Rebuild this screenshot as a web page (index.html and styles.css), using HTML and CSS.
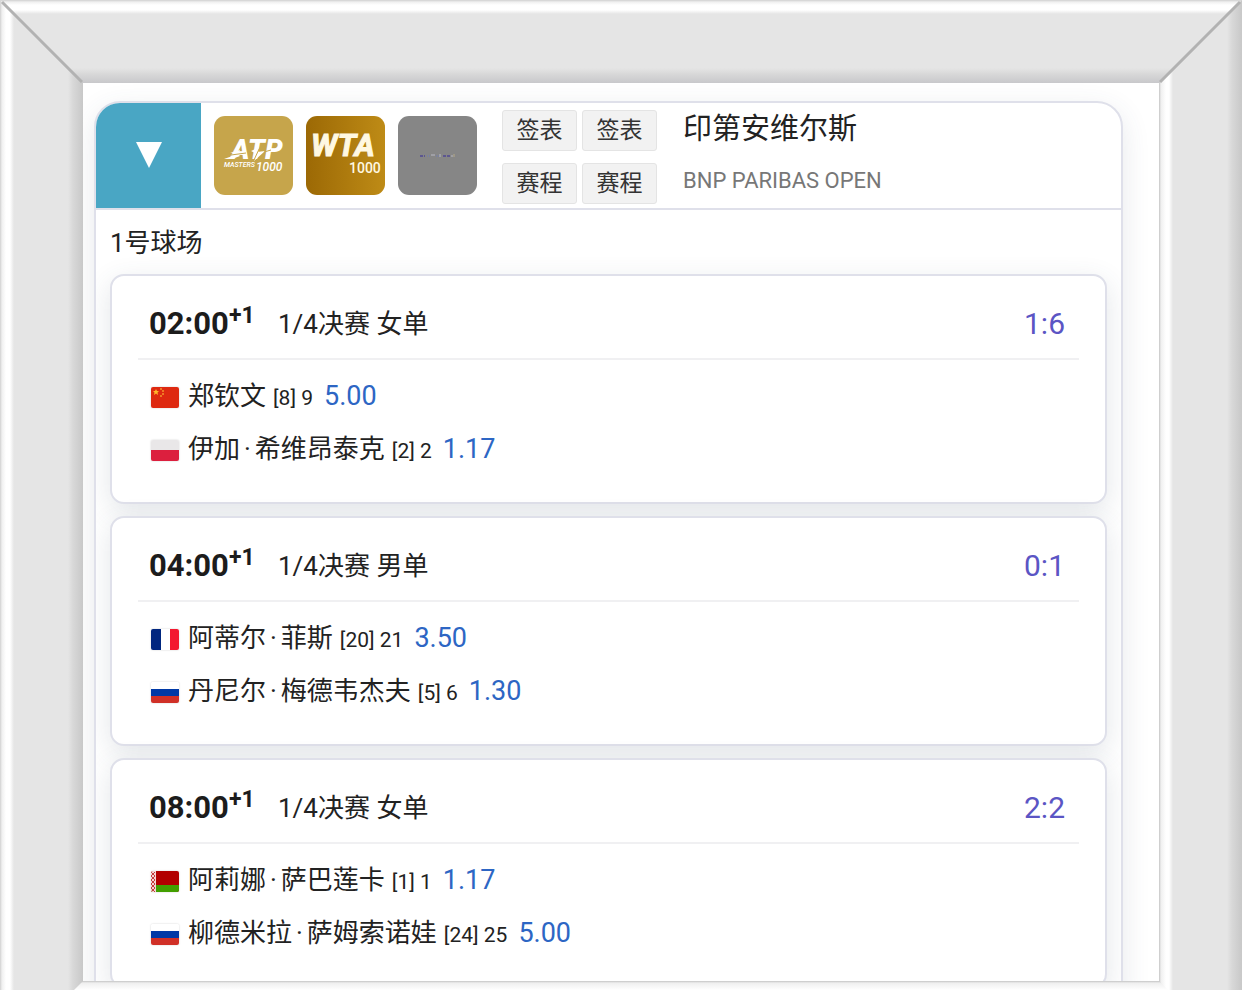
FILE: index.html
```
<!DOCTYPE html>
<html lang="zh-CN">
<head>
<meta charset="UTF-8">
<meta name="viewport" content="width=device-width, initial-scale=1.0">
<title>印第安维尔斯</title>
<link rel="stylesheet" href="styles.css">
</head>
<body>
    <div class="frame">
        <div class="bar left"></div>
        <div class="bar right"></div>
        <div class="bar top"></div>
        <div class="bar bottom"></div>
        <svg class="mitre mitre-left" viewBox="0 0 83 83"><path d="M2 2L82 82" stroke="#b2b2b2" stroke-width="3"/></svg>
        <svg class="mitre mitre-right" viewBox="0 0 83 83"><path d="M81 2L1 82" stroke="#b2b2b2" stroke-width="3"/></svg>

        <main class="screen">
            <section class="tour">
                <header class="tour-head">
                    <button class="toggle" type="button" aria-label="收起">
                        <svg width="26" height="26" viewBox="0 0 26 26"><path d="M0 0H26L13 26Z" fill="#fff"/></svg>
                    </button>
                    <div class="logos">
                        <svg class="logo" viewBox="0 0 79 79">
                            <rect width="79" height="79" rx="11" fill="#c6a54b"/>
                            <g fill="#fff" font-family="Roboto, sans-serif" font-style="italic">
                                <text x="17" y="43" font-size="28" font-weight="900">ATP</text>
                                <text x="10" y="51" font-size="7" font-weight="500">MASTERS</text>
                                <text x="42" y="55" font-size="12" font-weight="500">1000</text>
                            </g>
                            <path d="M10 43L24 38L26 40L18 43ZM16 37L26 34L25 37ZM37 35L46 31L43 36L51 35L40 45L43 38Z" fill="#fff"/>
                            <path d="M17 39L32 37M46 31L40 44M50 36L57 34" fill="none" stroke="#c6a54b" stroke-width="1"/>
                        </svg>
                        <svg class="logo" viewBox="0 0 79 79">
                            <defs>
                                <linearGradient id="gold" x1="0" y1="0" x2="1" y2="0">
                                    <stop offset="0" stop-color="#9c6905"/>
                                    <stop offset="1" stop-color="#be8b16"/>
                                </linearGradient>
                            </defs>
                            <rect width="79" height="79" rx="11" fill="url(#gold)"/>
                            <g fill="#fff8e2" font-family="Roboto, sans-serif">
                                <text x="5" y="40" font-size="31" font-weight="700" font-style="italic" stroke="#fff8e2" stroke-width="1">WTA</text>
                                <text x="43" y="57" font-size="14" font-weight="500">1000</text>
                            </g>
                        </svg>
                        <svg class="logo" viewBox="0 0 79 79">
                            <rect width="79" height="79" rx="11" fill="#868686"/>
                            <path d="M22 40H27M45 40H52" stroke="#5d5790" stroke-width="2" stroke-dasharray="3 1"/>
                            <path d="M29 40H32M38 40H41" stroke="#7980a0" stroke-width="2" stroke-dasharray="1 1"/>
                            <path d="M33 39H37M42 38V41M53 40H55" stroke="#b9b9c4" stroke-width="1"/>
                            <path d="M56 38V41" stroke="#b5a988" stroke-width="1"/>
                        </svg>
                    </div>
                    <div class="links">
                        <button type="button">签表</button>
                        <button type="button">签表</button>
                        <button type="button">赛程</button>
                        <button type="button">赛程</button>
                    </div>
                    <div class="name">
                        <h1>印第安维尔斯</h1>
                        <p>BNP PARIBAS OPEN</p>
                    </div>
                </header>

                <div class="court">
                    <h2>1号球场</h2>

                    <article class="match">
                        <div class="match-head">
                            <span class="time">02:00<sup>+1</sup></span>
                            <span class="round">1/4决赛 女单</span>
                            <span class="score">1:6</span>
                        </div>
                        <div class="player">
                            <svg class="flag" viewBox="0 0 28 21">
                                <rect width="28" height="21" fill="#de2910"/>
                                <path d="M5 2L6 4H8L6.500 5.500L7 8L5 6.500L3 8L3.500 5.500L2 4H4Z" fill="#ffb52b"/>
                                <circle cx="10" cy="2" r="1" fill="#f5952b"/>
                                <circle cx="12" cy="4" r="1" fill="#f5952b"/>
                                <circle cx="12" cy="7" r="1" fill="#f5952b"/>
                                <circle cx="10" cy="9" r="1" fill="#f5952b"/>
                            </svg>
                            <span>郑钦文</span>
                            <span class="rank">[8] 9</span>
                            <span class="odds">5.00</span>
                        </div>
                        <div class="player">
                            <svg class="flag" viewBox="0 0 28 21">
                                <rect width="28" height="21" fill="#e9e7e8"/>
                                <rect y="10" width="28" height="11" fill="#dc1f3e"/>
                            </svg>
                            <span>伊加<span class="dot">·</span>希维昂泰克</span>
                            <span class="rank">[2] 2</span>
                            <span class="odds">1.17</span>
                        </div>
                    </article>

                    <article class="match">
                        <div class="match-head">
                            <span class="time">04:00<sup>+1</sup></span>
                            <span class="round">1/4决赛 男单</span>
                            <span class="score">0:1</span>
                        </div>
                        <div class="player">
                            <svg class="flag" viewBox="0 0 28 21">
                                <rect width="28" height="21" fill="#fff"/>
                                <rect width="10" height="21" fill="#00267f"/>
                                <rect x="19" width="9" height="21" fill="#f31830"/>
                            </svg>
                            <span>阿蒂尔<span class="dot">·</span>菲斯</span>
                            <span class="rank">[20] 21</span>
                            <span class="odds">3.50</span>
                        </div>
                        <div class="player">
                            <svg class="flag" viewBox="0 0 28 21">
                                <rect width="28" height="21" fill="#fff"/>
                                <rect y="7" width="28" height="7" fill="#0039a6"/>
                                <rect y="14" width="28" height="7" fill="#d03027"/>
                            </svg>
                            <span>丹尼尔<span class="dot">·</span>梅德韦杰夫</span>
                            <span class="rank">[5] 6</span>
                            <span class="odds">1.30</span>
                        </div>
                    </article>

                    <article class="match">
                        <div class="match-head">
                            <span class="time">08:00<sup>+1</sup></span>
                            <span class="round">1/4决赛 女单</span>
                            <span class="score">2:2</span>
                        </div>
                        <div class="player">
                            <svg class="flag" viewBox="0 0 28 21">
                                <rect width="28" height="21" fill="#b20000"/>
                                <rect y="14" width="28" height="7" fill="#429f00"/>
                                <rect width="5" height="21" fill="#f2d5d5"/>
                                <path d="M0 1L4 5L0 9L4 13L0 17L4 21M4 1L0 5L4 9L0 13L4 17L0 21" fill="none" stroke="#c43c3c"/>
                            </svg>
                            <span>阿莉娜<span class="dot">·</span>萨巴莲卡</span>
                            <span class="rank">[1] 1</span>
                            <span class="odds">1.17</span>
                        </div>
                        <div class="player">
                            <svg class="flag" viewBox="0 0 28 21">
                                <rect width="28" height="21" fill="#fff"/>
                                <rect y="7" width="28" height="7" fill="#0039a6"/>
                                <rect y="14" width="28" height="7" fill="#d03027"/>
                            </svg>
                            <span>柳德米拉<span class="dot">·</span>萨姆索诺娃</span>
                            <span class="rank">[24] 25</span>
                            <span class="odds">5.00</span>
                        </div>
                    </article>
                </div>
            </section>
        </main>
    </div>
</body>
</html>
```
FILE: styles.css
```
* {
    box-sizing: border-box;
}
body {
    margin: 0;
    color: #222;
    font-family: Roboto, "Noto Sans CJK SC", sans-serif;
    font-size: 26px;
}
h1, h2, p {
    margin: 0;
    font-weight: 400;
}
button {
    border: 0;
    padding: 0;
    color: inherit;
    font: inherit;
    cursor: pointer;
}

/* frame */
.frame {
    display: grid;
    grid-template-columns: 83px minmax(0, 1fr) 83px;
    grid-template-rows: 83px minmax(0, 1fr) 9px;
    height: 100vh;
    overflow: hidden;
}
.left {
    grid-area: 1 / 1 / 4 / 2;
    background: linear-gradient(90deg, #d0d0d0 0, #f0f0f0 2px, #fff 6px, #fff 10px, #e5e5e5 14px, #e5e5e5 68px, #d8d8d8 73px, #c8c8c8 83px);
}
.right {
    grid-area: 1 / 3 / 4 / 4;
    background: linear-gradient(90deg, #c4c4c4 0, #f0f0f0 2px, #fff 7px, #fff 10px, #e5e5e5 14px, #e5e5e5 68px, #d8d8d8 73px, #c8c8c8 83px);
}
.top {
    grid-area: 1 / 1 / 2 / 4;
    background: linear-gradient(#d0d0d0 0, #f0f0f0 2px, #fff 5px, #fff 10px, #e5e5e5 14px, #e5e5e5 68px, #d8d8d8 74px, #c8c8cb 83px);
    clip-path: polygon(0 0, 100% 0, calc(100% - 83px) 100%, 83px 100%);
}
.bottom {
    grid-area: 3 / 1 / 4 / 4;
    background: linear-gradient(#c4c4c4 0, #efefef 2px, #fff 9px);
    clip-path: polygon(83px 0, calc(100% - 83px) 0, calc(100% - 74px) 100%, 74px 100%);
}
.mitre {
    z-index: 1;
    width: 83px;
    height: 83px;
}
.mitre-left {
    grid-area: 1 / 1;
}
.mitre-right {
    grid-area: 1 / 3;
}
.screen {
    grid-area: 2 / 2;
    padding: 18px 36px 0 11px;
    overflow: hidden;
    background: #fff;
}

/* tournament */
.tour {
    border: 2px solid #dfe0ea;
    border-radius: 26px;
    overflow: hidden;
    background: #fff;
    box-shadow: 0 8px 28px rgba(60, 70, 100, 0.12);
}
.tour-head {
    display: flex;
    height: 107px;
    border-bottom: 2px solid #dfe0ea;
}
.toggle {
    display: flex;
    align-items: center;
    justify-content: center;
    width: 105px;
    padding-bottom: 2px;
    background: #49a6c4;
}
.logos {
    display: flex;
    gap: 13px;
    padding: 13px 25px 0 13px;
}
.logo {
    width: 79px;
    height: 79px;
}
.links {
    display: grid;
    grid-template-columns: 75px 75px;
    grid-auto-rows: 41px;
    gap: 12px 5px;
    padding-top: 7px;
}
.links button {
    border: 1px solid #e4e4e4;
    border-radius: 3px;
    background: #f2f2f2;
    color: #333;
    font-size: 23px;
    line-height: 39px;
}
.name {
    padding: 5px 0 0 26px;
}
.name h1 {
    font-size: 29px;
    line-height: 42px;
}
.name p {
    margin-top: 15px;
    color: #777;
    font-size: 22px;
    line-height: 32px;
}

/* matches */
.court {
    padding: 0 14px 12px;
}
.court h2 {
    padding: 13px 0 11px;
    font-size: 26px;
    line-height: 40px;
}
.match {
    height: 230px;
    margin-bottom: 12px;
    padding: 0 26px;
    border: 2px solid #dfe0ea;
    border-radius: 14px;
    background: #fff;
    box-shadow: 0 8px 28px rgba(60, 80, 100, 0.14);
}
.match-head {
    display: flex;
    align-items: center;
    height: 84px;
    margin-bottom: 10px;
    padding: 14px 14px 0 11px;
    border-bottom: 2px solid #f0f0f2;
    line-height: 40px;
}
.time {
    width: 129px;
    color: #1c1c1c;
    font-size: 31px;
    font-weight: 700;
}
.time sup {
    font-size: 23px;
    line-height: 0;
}
.score {
    margin-left: auto;
    color: #5b55c4;
    font-size: 30px;
}
.player {
    display: flex;
    align-items: baseline;
    height: 53px;
    padding-left: 13px;
    line-height: 53px;
}
.flag {
    align-self: center;
    width: 28px;
    height: 21px;
    margin: 2px 9px 0 0;
    border-radius: 2px;
    box-shadow: 0 0 2px rgba(0, 0, 0, 0.2);
}
.dot {
    padding: 0 4px;
}
.rank {
    margin: 0 11px 0 7px;
    font-size: 21px;
}
.odds {
    color: #2d66c4;
    font-size: 27px;
}
```
